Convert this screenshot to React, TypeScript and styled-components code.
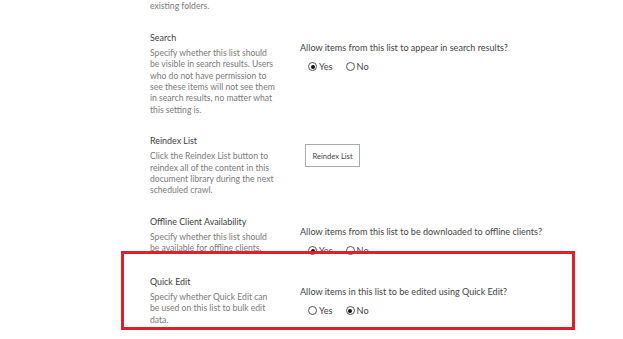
import styled, { createGlobalStyle } from 'styled-components';

const GlobalStyle = createGlobalStyle`
  html, body {
    margin: 0;
    padding: 0;
    background: #ffffff;
    overflow: hidden;
  }
  body {
    font-family: Lato, "Open Sans", sans-serif;
  }
`;

const Page = styled.div`
  position: relative;
  width: 623px;
  height: 339px;
  overflow: hidden;
`;

const Scroller = styled.div`
  margin-top: -10px;
  padding-left: 150px;
  display: flex;
  flex-direction: column;
  gap: 18px;
`;

const Desc = styled.p`
  margin: 0;
  width: 127px;
  font-size: 8.6px;
  line-height: 11.4px;
  color: #7a7a7a;
`;

const Section = styled.section`
  display: grid;
  grid-template-columns: 150px 1fr;
`;

const Left = styled.div`
  display: flex;
  flex-direction: column;
  gap: 3px;
`;

const Title = styled.h3`
  margin: 0;
  font-size: 8.9px;
  line-height: 14px;
  font-weight: 400;
  color: #3c3c3c;
`;

const Right = styled.div`
  padding-top: 10px;
  display: flex;
  flex-direction: column;
  align-items: flex-start;
  gap: 6px;
`;

const Question = styled.div`
  font-size: 9.05px;
  line-height: 14px;
  color: #444444;
  white-space: nowrap;
`;

const RadioRow = styled.div`
  display: flex;
  gap: 13px;
  padding-left: 8px;
  height: 12px;
  align-items: center;
`;

const RadioLabel = styled.label`
  display: flex;
  align-items: center;
  gap: 2px;
  font-size: 9.2px;
  color: #444444;
`;

const Circle = styled.span<{ $on: boolean }>`
  box-sizing: border-box;
  width: 9px;
  height: 9px;
  border-radius: 50%;
  border: 1px solid #555555;
  display: flex;
  align-items: center;
  justify-content: center;
  &::after {
    content: '';
    width: 4px;
    height: 4px;
    border-radius: 50%;
    background: #111111;
    display: ${(p) => (p.$on ? 'block' : 'none')};
  }
`;

const Button = styled.button`
  margin: 10px 0 0 5px;
  height: 23px;
  width: 55px;
  padding: 0;
  background: #ffffff;
  border: 1px solid #ababab;
  font-family: inherit;
  font-size: 7.6px;
  color: #444444;
  white-space: nowrap;
`;

const Highlight = styled.div`
  position: absolute;
  left: 121px;
  top: 251px;
  width: 454px;
  height: 79px;
  box-sizing: border-box;
  border: 3px solid #e11f28;
  pointer-events: none;
`;

function Radios({ value }: { value: 'yes' | 'no' }) {
  return (
    <RadioRow>
      <RadioLabel>
        <Circle $on={value === 'yes'} />
        Yes
      </RadioLabel>
      <RadioLabel>
        <Circle $on={value === 'no'} />
        No
      </RadioLabel>
    </RadioRow>
  );
}

export default function App() {
  return (
    <Page>
      <GlobalStyle />
      <Scroller>
        <Desc>
          setting does not affect
          <br />
          existing folders.
        </Desc>

        <Section>
          <Left>
            <Title>Search</Title>
            <Desc>
              Specify whether this list should be visible in search results. Users who do not have
              permission to see these items will not see them in search results, no matter what
              this setting is.
            </Desc>
          </Left>
          <Right>
            <Question>Allow items from this list to appear in search results?</Question>
            <Radios value="yes" />
          </Right>
        </Section>

        <Section>
          <Left>
            <Title>Reindex List</Title>
            <Desc>
              Click the Reindex List button to reindex all of the content in this document library
              during the next scheduled crawl.
            </Desc>
          </Left>
          <div>
            <Button>Reindex List</Button>
          </div>
        </Section>

        <Section>
          <Left>
            <Title>Offline Client Availability</Title>
            <Desc>Specify whether this list should be available for offline clients.</Desc>
          </Left>
          <Right>
            <Question>Allow items from this list to be downloaded to offline clients?</Question>
            <Radios value="yes" />
          </Right>
        </Section>

        <Section>
          <Left>
            <Title>Quick Edit</Title>
            <Desc>Specify whether Quick Edit can be used on this list to bulk edit data.</Desc>
          </Left>
          <Right>
            <Question>Allow items in this list to be edited using Quick Edit?</Question>
            <Radios value="no" />
          </Right>
        </Section>
      </Scroller>
      <Highlight />
    </Page>
  );
}
